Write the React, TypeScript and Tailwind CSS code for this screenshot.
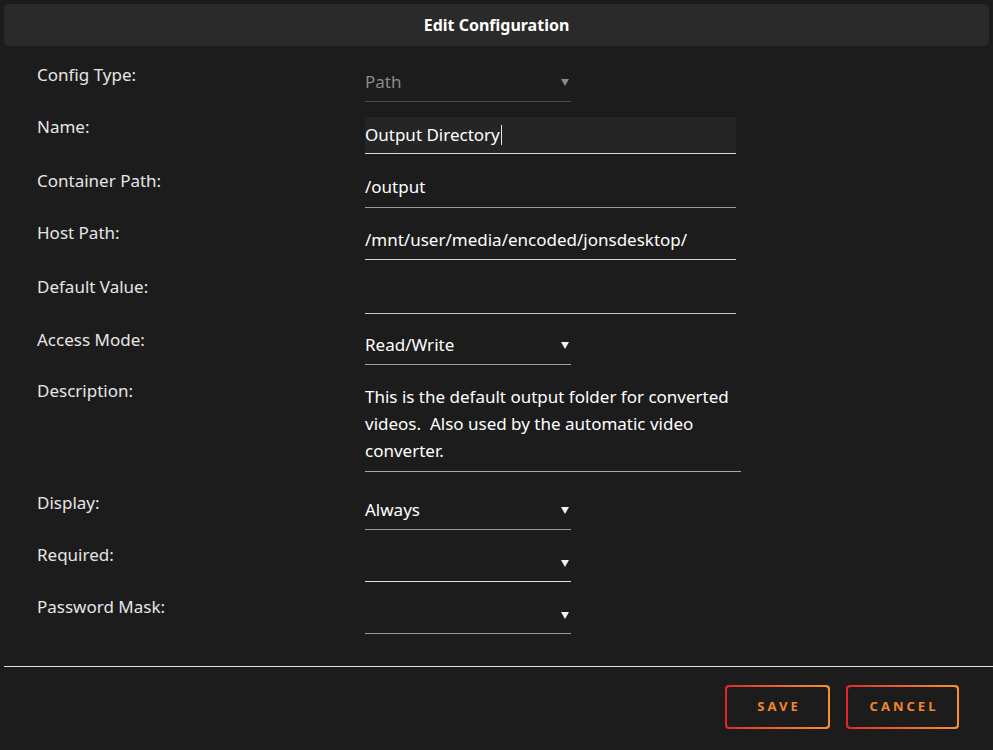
import React from "react";

const Arrow = ({ dim }: { dim?: boolean }) => (
  <svg width="8" height="8" viewBox="0 0 8 8" className="shrink-0">
    <path d="M0 1 L8 1 L4 8 Z" fill={dim ? "#8a8a8a" : "#f2f2f2"} />
  </svg>
);

const Label = ({ children }: { children: React.ReactNode }) => (
  <div className="w-[328px] shrink-0 text-[17px] text-[#e6e6e6]">{children}</div>
);

export default function App() {
  return (
    <div
      className="w-[993px] h-[750px] bg-[#1c1c1c] overflow-hidden"
      style={{ fontFamily: '"Noto Sans", "Open Sans", sans-serif' }}
    >
      <div className="px-[4px] pt-[4px]">
        <div className="h-[42px] rounded-[5px] bg-[#2a2a2a] flex items-center justify-center text-white font-bold text-[16px]">
          Edit Configuration
        </div>
      </div>

      <div className="pl-[37px] pt-[19px] flex flex-col">
        {/* Config Type */}
        <div className="flex items-start h-[52px]">
          <Label>
            <div className="leading-[20px]">Config Type:</div>
          </Label>
          <div className="w-[206px] h-[37px] border-b border-[#4a4a4a] flex items-center justify-between pr-[2px] pb-[2px]">
            <span className="text-[17px] text-[#8a8a8a]">Path</span>
            <Arrow dim />
          </div>
        </div>

        {/* Name */}
        <div className="flex items-start h-[54px]">
          <Label>
            <div className="leading-[20px]">Name:</div>
          </Label>
          <div className="w-[371px] h-[37px] bg-[#252525] border-b border-[#d8d8d8] flex items-center">
            <span className="text-[17px] text-white">Output Directory</span>
            <span className="w-[1px] h-[20px] bg-[#e6e6e6] ml-[1px]" />
          </div>
        </div>

        {/* Container Path */}
        <div className="flex items-start h-[52px]">
          <Label>
            <div className="leading-[20px]">Container Path:</div>
          </Label>
          <div className="w-[371px] h-[37px] border-b border-[#9a9a9a] flex items-center pb-[4px]">
            <span className="text-[17px] text-white">/output</span>
          </div>
        </div>

        {/* Host Path */}
        <div className="flex items-start h-[54px]">
          <Label>
            <div className="leading-[20px]">Host Path:</div>
          </Label>
          <div className="w-[371px] h-[37px] border-b border-[#d0d0d0] flex items-center pb-[2px]">
            <span className="text-[17px] text-white">/mnt/user/media/encoded/jonsdesktop/</span>
          </div>
        </div>

        {/* Default Value */}
        <div className="flex items-start h-[51px]">
          <Label>
            <div className="leading-[20px]">Default Value:</div>
          </Label>
          <div className="w-[371px] h-[37px] border-b border-[#c8c8c8]" />
        </div>

        {/* Access Mode */}
        <div className="flex items-start h-[53px]">
          <Label>
            <div className="leading-[20px] pt-[2px]">Access Mode:</div>
          </Label>
          <div className="w-[206px] h-[37px] border-b border-[#a0a0a0] flex items-center justify-between pr-[2px] pb-[2px]">
            <span className="text-[17px] text-white">Read/Write</span>
            <Arrow />
          </div>
        </div>

        {/* Description */}
        <div className="flex items-start h-[112px]">
          <Label>
            <div className="leading-[20px]">Description:</div>
          </Label>
          <div className="w-[376px] h-[91px] border-b border-[#a8a8a8] pt-[2px] text-[17px] leading-[27px] text-white whitespace-pre-wrap">
            {"This is the default output folder for converted videos.  Also used by the automatic video converter."}
          </div>
        </div>

        {/* Display */}
        <div className="flex items-start h-[52px]">
          <Label>
            <div className="leading-[20px]">Display:</div>
          </Label>
          <div className="w-[206px] h-[37px] border-b border-[#9a9a9a] flex items-center justify-between pr-[2px] pb-[2px]">
            <span className="text-[17px] text-white">Always</span>
            <Arrow />
          </div>
        </div>

        {/* Required */}
        <div className="flex items-start h-[52px]">
          <Label>
            <div className="leading-[20px]">Required:</div>
          </Label>
          <div className="w-[206px] h-[37px] border-b border-[#e0e0e0] flex items-center justify-end pr-[2px]">
            <Arrow />
          </div>
        </div>

        {/* Password Mask */}
        <div className="flex items-start h-[52px]">
          <Label>
            <div className="leading-[20px]">Password Mask:</div>
          </Label>
          <div className="w-[206px] h-[37px] border-b border-[#9a9a9a] flex items-center justify-end pr-[2px]">
            <Arrow />
          </div>
        </div>
      </div>

      {/* Divider */}
      <div className="ml-[4px] mt-[17px] h-[1px] bg-[#e0e0e0]" />

      {/* Buttons */}
      <div className="flex justify-end gap-[16px] pr-[34px] pt-[18px]">
        <div className="w-[105px] h-[44px] rounded-[4px] p-[2px] bg-gradient-to-r from-[#e0242a] to-[#f7902f]">
          <div className="w-full h-full rounded-[3px] bg-[#1c1c1c] flex items-center justify-center text-[13px] font-bold tracking-[3px] text-[#f0862f] pl-[3px]">
            SAVE
          </div>
        </div>
        <div className="w-[113px] h-[44px] rounded-[4px] p-[2px] bg-gradient-to-r from-[#e0242a] to-[#f7902f]">
          <div className="w-full h-full rounded-[3px] bg-[#1c1c1c] flex items-center justify-center text-[13px] font-bold tracking-[3px] text-[#f0862f] pl-[3px]">
            CANCEL
          </div>
        </div>
      </div>
    </div>
  );
}
